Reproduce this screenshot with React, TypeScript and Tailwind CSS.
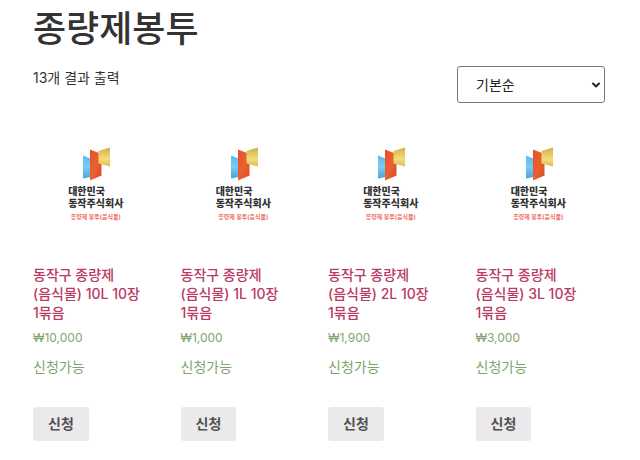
import { useId, useState } from 'react';
import { ChevronDown } from 'lucide-react';

interface Product {
  name: string;
  price: string;
}

const PRODUCTS: Product[] = [
  { name: '동작구 종량제 (음식물) 10L 10장 1묶음', price: '₩10,000' },
  { name: '동작구 종량제 (음식물) 1L 10장 1묶음', price: '₩1,000' },
  { name: '동작구 종량제 (음식물) 2L 10장 1묶음', price: '₩1,900' },
  { name: '동작구 종량제 (음식물) 3L 10장 1묶음', price: '₩3,000' },
];

// Three folded panels: blue, orange, gold.
const LogoMark = () => {
  const id = useId();
  return (
    <svg viewBox="0 0 28 34" className="ml-[15px] h-[34px] w-[28px]" aria-hidden="true">
      <defs>
        <linearGradient id={`${id}-blue`} x1="0" y1="0" x2="0" y2="1">
          <stop offset="0" stopColor="#5fb9ea" />
          <stop offset="0.5" stopColor="#7ccbf0" />
          <stop offset="1" stopColor="#45a5e0" />
        </linearGradient>
        <linearGradient id={`${id}-orange`} x1="0" y1="0" x2="1" y2="1">
          <stop offset="0" stopColor="#e2502a" />
          <stop offset="0.5" stopColor="#ea6130" />
          <stop offset="1" stopColor="#d94a26" />
        </linearGradient>
        <linearGradient id={`${id}-gold`} x1="0" y1="0" x2="0" y2="1">
          <stop offset="0" stopColor="#d3ad45" />
          <stop offset="0.6" stopColor="#f3dd7c" />
          <stop offset="1" stopColor="#dfbd50" />
        </linearGradient>
      </defs>
      <path d="M0 8.5 7.5 11.5V30L0 31.5Z" fill={`url(#${id}-blue)`} />
      <path d="M7 2.5 18.5 7V28.5L7 33.5Z" fill={`url(#${id}-orange)`} />
      <path d="M15.5 4 27 0.5V19.5L15.5 16.5Z" fill={`url(#${id}-gold)`} />
    </svg>
  );
};

const ProductCard = ({ name, price }: Product) => (
  <li className="flex flex-col items-start">
    <div className="flex h-32 w-full flex-col items-center pt-6 pr-1">
      <div className="flex flex-col items-start">
        <LogoMark />
        <p className="mt-1 text-[10px] leading-3 font-black text-[#333333]">
          대한민국
          <br />
          동작주식회사
        </p>
      </div>
      <p className="mt-1 text-[6px] leading-2 font-bold text-[#ec7468]">종량제 봉투(음식물)</p>
    </div>
    <a href="#product" className="mt-[14px] text-[#b93a63]">
      <h2 className="text-[14px] leading-[19px] font-medium break-keep">{name}</h2>
    </a>
    <p className="mt-[6px] text-[12px] leading-5 text-[#7fa56f]">{price}</p>
    <p className="mt-[9px] text-[14px] leading-5 text-[#7fa56f]">신청가능</p>
    <button
      type="button"
      className="mt-[30px] rounded-[3px] bg-[#ebe9eb] px-[15px] py-[7px] text-[14px] leading-5 font-bold text-[#515151]"
    >
      신청
    </button>
  </li>
);

export default function App() {
  const [order, setOrder] = useState('menu_order');

  return (
    <main className="bg-white pt-[9px] pr-[35px] pb-5 pl-[33px] font-[Inter,'Noto_Sans_CJK_KR',sans-serif] text-[#333333]">
      <h1 className="text-[36px] leading-10 font-medium">종량제봉투</h1>
      <div className="mt-[17px] flex items-start justify-between">
        <p className="mt-[2px] text-[14px] leading-5">13개 결과 출력</p>
        <div className="relative">
          <select
            aria-label="상점 주문"
            value={order}
            onChange={(e) => setOrder(e.target.value)}
            className="h-[37px] w-[148px] appearance-none rounded-[3px] border border-[#777777] bg-white pr-6 pl-[18px] text-[14px] text-[#222222]"
          >
            <option value="menu_order">기본순</option>
            <option value="popularity">인기순</option>
            <option value="date">최신순</option>
            <option value="price">가격 낮은순</option>
          </select>
          <ChevronDown
            size={12}
            strokeWidth={4}
            className="pointer-events-none absolute top-[13px] right-[3px] text-[#222222]"
          />
        </div>
      </div>
      <ul className="mt-5 grid grid-cols-4 gap-[18px]">
        {PRODUCTS.map((product) => (
          <ProductCard key={product.name} {...product} />
        ))}
      </ul>
    </main>
  );
}
